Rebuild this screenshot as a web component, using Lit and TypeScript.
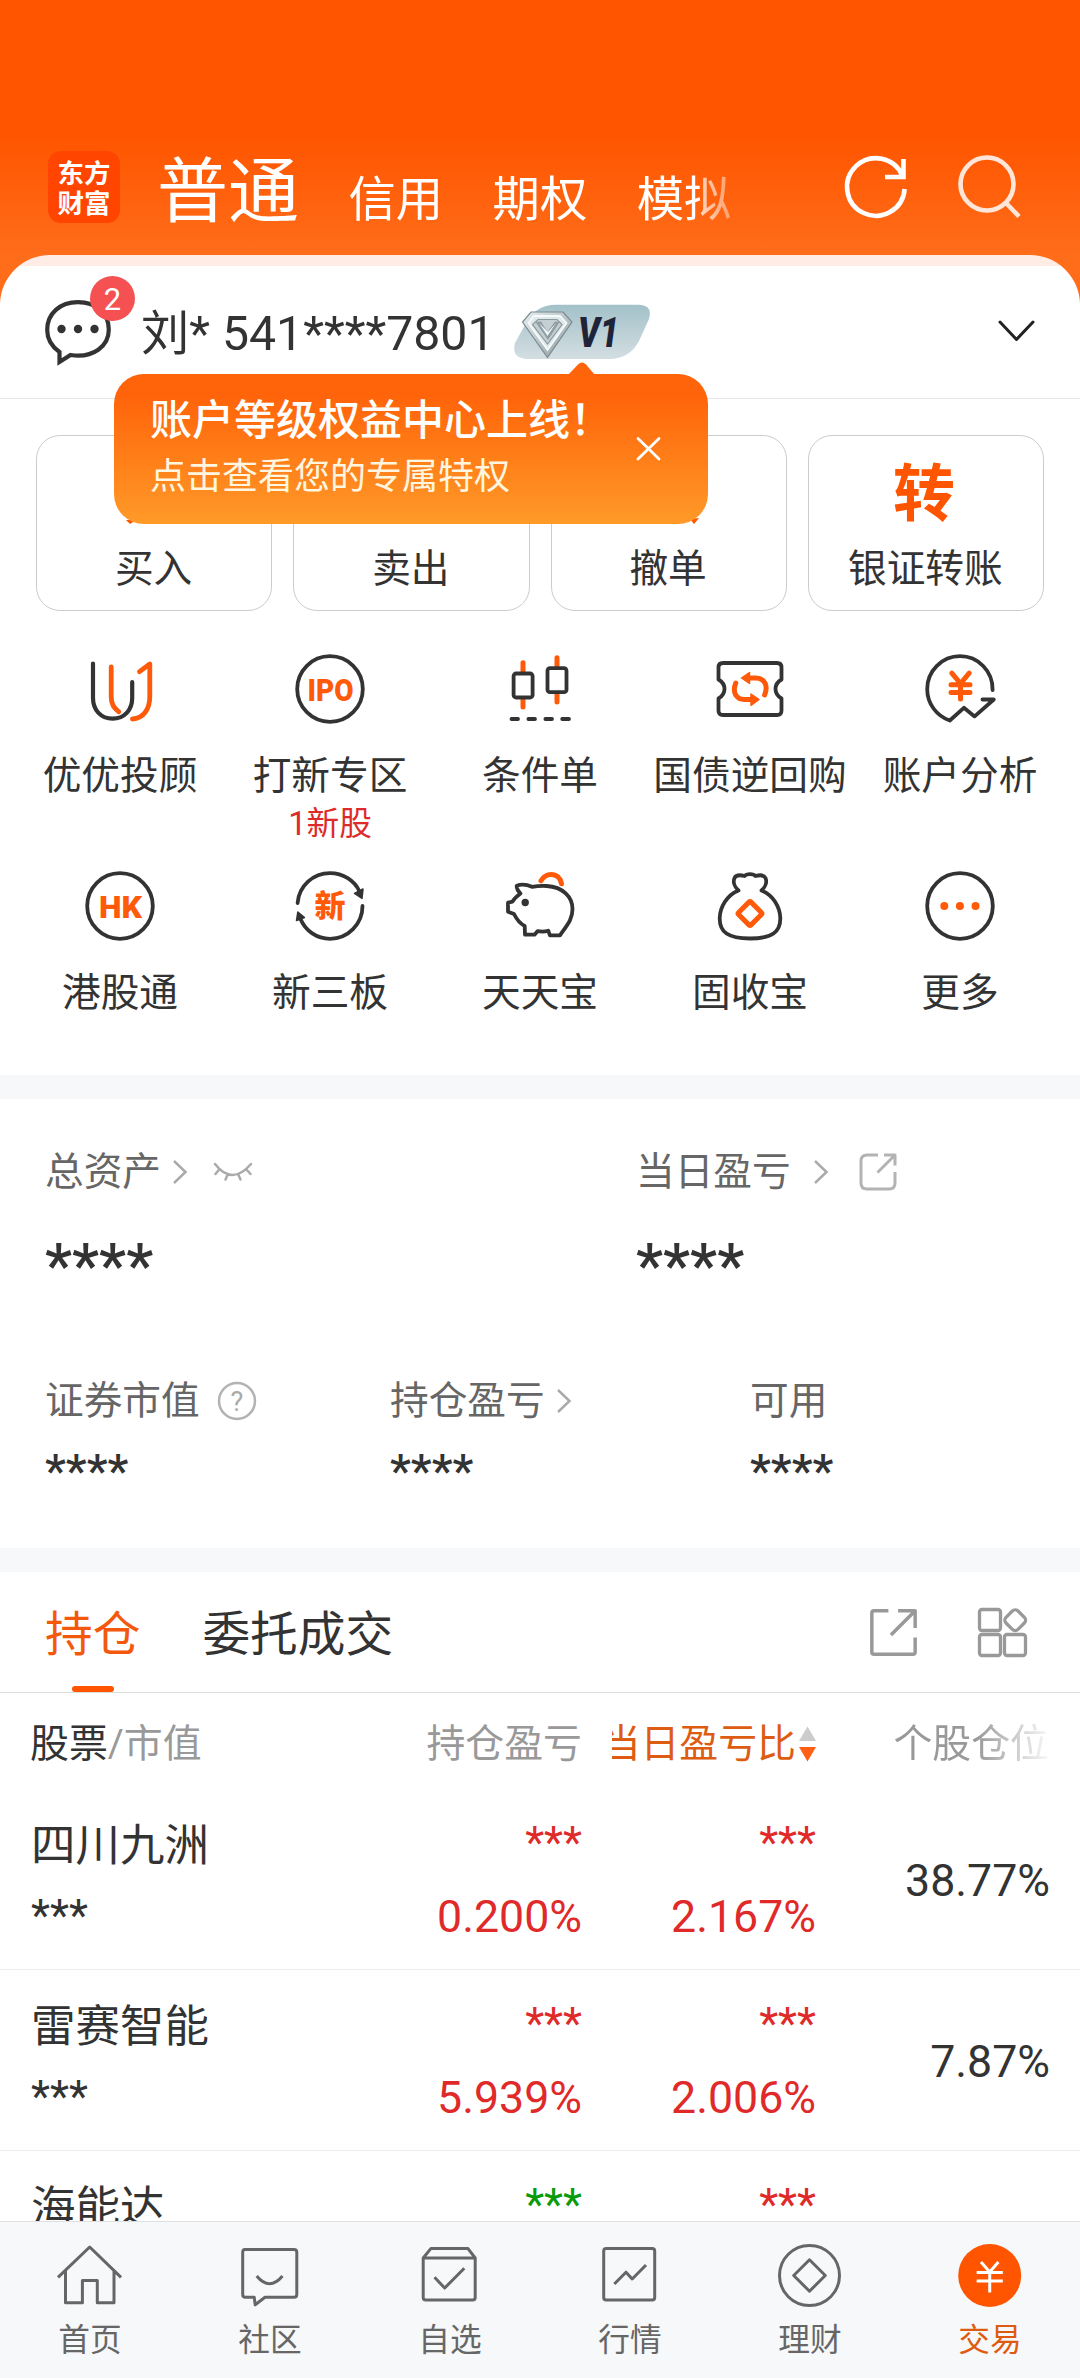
import { LitElement, html, svg, css, nothing, TemplateResult } from "lit";
import { customElement, property } from "lit/decorators.js";
import { classMap } from "lit/directives/class-map.js";

const INK = "#333333";
const ORANGE = "#ff5a0a";

/* Line icons, each drawn on an 80 x 80 board. */
const icons: Record<string, TemplateResult> = {
  advisor: svg`
    <g fill="none" stroke-width="4.2" stroke-linecap="round" stroke-linejoin="round">
      <path stroke="${INK}" d="M13 14.5V49C13 61 21 69.7 32.6 69.7S52.2 61 52.2 49V33"/>
      <path stroke="${ORANGE}" stroke-width="4.8" d="M31.2 18V48C31.2 54.5 34 59.5 38.8 62.7M59.5 22.7L69.8 15V47C69.8 61 63 69.5 52.4 70"/>
    </g>`,
  ipo: svg`
    <circle cx="40" cy="40" r="32.8" fill="none" stroke="${INK}" stroke-width="3.8"/>
    <text class="glyph" x="40.5" y="51.5" text-anchor="middle" font-size="32" textLength="46" lengthAdjust="spacingAndGlyphs">IPO</text>`,
  candles: svg`
    <g fill="none" stroke-linecap="round" stroke-linejoin="round">
      <path stroke="${ORANGE}" stroke-width="5" d="M23 13.8V24M23 50V58M57 8.8V19M57 44V53"/>
      <g stroke="${INK}" stroke-width="3.8">
        <rect x="13.6" y="24.5" width="19" height="24" rx="2.5" fill="#fff"/>
        <rect x="47.5" y="19.2" width="19" height="24" rx="2.5" fill="#fff"/>
        <path d="M11.5 70H18M28.4 70H35M45.4 70H52M62.2 70H69"/>
      </g>
    </g>`,
  ticket: svg`
    <path fill="none" stroke="${INK}" stroke-width="3.8" stroke-linejoin="round"
      d="M13 14H67Q71.5 14 71.5 18.5V30.5Q65.5 34 65.5 40T71.5 49.5V61.5Q71.5 66 67 66H13Q8.5 66 8.5 61.5V49.5Q14.5 46 14.5 40T8.5 30.5V18.5Q8.5 14 13 14Z"/>
    <path fill="none" stroke="${ORANGE}" stroke-width="5" stroke-linecap="round" d="M39 29H46C56 29.5 58 38 54.6 46M25.8 34C22 43 26 50.5 34.5 50.5H41"/>
    <path fill="${ORANGE}" stroke="${ORANGE}" stroke-width="1.5" stroke-linejoin="round" d="M31.5 29L39.5 23.5V34.5ZM49 50.5L41 45V56.3Z"/>`,
  analysis: svg`
    <g fill="none" stroke-linecap="round" stroke-linejoin="round">
      <path stroke="${INK}" stroke-width="3.8" d="M72.6 41C73 22 58 7.2 40 7.2S7.2 22 7.2 40C7.2 54.5 16.5 67 29.8 71.5L43.9 58.8L54.6 67.4L73.8 50.5H62.5"/>
      <path stroke="${ORANGE}" stroke-width="5" d="M31.8 24.2L40.5 34.5L49.2 24.2M31 35.7H50M31 43.5H50M40.5 35V50"/>
    </g>`,
  hk: svg`
    <circle cx="40" cy="40" r="32.8" fill="none" stroke="${INK}" stroke-width="3.8"/>
    <text class="glyph" x="40.5" y="51.5" text-anchor="middle" font-size="32" textLength="43" lengthAdjust="spacingAndGlyphs">HK</text>`,
  board: svg`
    <g fill="none" stroke="${INK}" stroke-width="3.8" stroke-linecap="round">
      <path d="M7.6 37C9 20 23 7.2 40 7.2C53 7.2 64.5 14.5 69.5 25.5"/>
      <path d="M72.5 40C72.5 58 58 72.8 40 72.8C27 72.8 15.5 65 10.5 53"/>
    </g>
    <path fill="${INK}" stroke="${INK}" stroke-width="1.5" stroke-linejoin="round" d="M64.5 27.5L73 23L72 32.5ZM7.8 46L6.5 54.5L14.5 51.5Z"/>
    <text class="glyph" x="40" y="51" text-anchor="middle" font-size="31">新</text>`,
  piggy: svg`
    <g fill="none" stroke-linecap="round" stroke-linejoin="round">
      <path stroke="${INK}" stroke-width="3.8" d="M20.5 27.5C18 25 16.5 22.5 16.7 19.7C22 17.7 28 19 32 20.8C37 20 42 19.8 46.7 20C63 21 72.5 31 72.5 43C72.5 53 68 58 60 69.3H50L48.3 64.8C45 65.8 41 65.8 37.5 65.2L34.5 68.7H25L24.7 60C19 57 16.5 53 14 48L8 45.7V36.7L12.5 35.7C14.5 32 17 30 20.5 27.5Z"/>
      <path stroke="${ORANGE}" stroke-width="5" d="M41 14.8C43.5 10.5 47 8.5 51 8.5C56.5 8.5 60.5 12 61.5 17.8"/>
    </g>
    <circle cx="25.2" cy="36.5" r="3.7" fill="${INK}"/>`,
  bag: svg`
    <path fill="none" stroke="${INK}" stroke-width="3.8" stroke-linejoin="round"
      d="M28.5 24.5C24 20.5 23 15.5 24.5 12C26 9 30 8.8 34.5 10C36.5 7.5 43.5 7.5 45.5 10C50 8.8 54 9 55.5 12C57 15.5 56 20.5 51.5 24.5C63 29 70 41 70.3 52C70.5 66 62 72.5 40 72.5S9.5 66 9.7 52C10 41 17 29 28.5 24.5Z"/>
    <rect x="31.2" y="38.7" width="17.6" height="17.6" rx="1.5" fill="none" stroke="${ORANGE}" stroke-width="5" stroke-linejoin="round" transform="rotate(45 40 47.5)"/>`,
  more: svg`
    <circle cx="40" cy="40" r="32.8" fill="none" stroke="${INK}" stroke-width="3.8"/>
    <g fill="${ORANGE}"><circle cx="24.3" cy="40" r="4"/><circle cx="39.9" cy="40" r="4"/><circle cx="55.5" cy="40" r="4"/></g>`,
  home: svg`<path class="line" d="M8 42.3L39.7 12L71 42.3M15.5 35.5V67.8H32.4V45.4H47.3V67.8H64V35.5"/>`,
  community: svg`<path class="line" d="M15 14.4H64Q66.8 14.4 66.8 17.2V59.5Q66.8 62.3 64 62.3H35L25.2 69.8L24.2 62.3H15.5Q12.7 62.3 12.7 59.5V17.2Q12.7 14.4 15 14.4ZM26.7 41Q39.5 56.5 52.5 41"/>`,
  watch: svg`<path class="line" d="M13.2 23L20.8 13.6H58L65.2 23V62.5Q65.2 65 62.7 65H15.7Q13.2 65 13.2 62.5ZM13.2 23H65.2M24.5 42.3L34.7 53L54.3 33.3"/>`,
  market: svg`<rect class="line" x="13.7" y="13.6" width="51" height="51.5" rx="2.5"/><path class="line" d="M24.3 49L36 37.2L42.2 44L56 30"/>`,
  wealth: svg`<circle class="line" cx="39.5" cy="40.5" r="30"/><path class="line" d="M39.5 24.8L55.3 40.5L39.5 56.2L23.7 40.5Z"/>`,
  trade: svg`<circle cx="39.7" cy="40.5" r="31.5" fill="#ff5500"/>
    <path fill="none" stroke="#fff" stroke-width="3" d="M31 27L39.7 37L48.4 27M26.6 37.5H52.8M26.6 46H52.8M39.7 37V57.5"/>`,
};

const board = (name: string) => html`<svg class="icon" viewBox="0 0 80 80">${icons[name]}</svg>`;

const shareSquare = html`
  <svg width="47" height="47" viewBox="0 0 46 46">
    <path fill="none" stroke="#999999" stroke-width="3.4" stroke-linejoin="round"
      d="M18 1.8H4Q1.8 1.8 1.8 4V42Q1.8 44.2 4 44.2H42Q44.2 44.2 44.2 42V28M27.5 1.8H44.2V18.5M43.5 2.5L20.5 25.5"/>
  </svg>`;

const shareRound = html`
  <svg width="38" height="38" viewBox="0 0 38 38">
    <path fill="none" stroke="#b3b3b3" stroke-width="3" stroke-linejoin="round"
      d="M19 2H8Q2 2 2 8V30Q2 36 8 36H30Q36 36 36 30V19M25 2H36V12.5M35 3L18.5 19.5"/>
  </svg>`;

const arrow = html`
  <svg class="arrow" width="16" height="26" viewBox="0 0 16 26">
    <path fill="none" stroke="#aaaaaa" stroke-width="2.5" d="M2 2L13.5 13L2 24"/>
  </svg>`;

const base = css`
  :host, * { box-sizing: border-box; }
  svg { display: block; flex: none; }
  .icon { width: 80px; height: 80px; }
  .glyph { fill: #ff5a0a; font-family: Roboto, "Noto Sans CJK SC", sans-serif; font-weight: 900; }
`;

@customElement("app-header")
class AppHeader extends LitElement {
  static styles = [base, css`
    :host { display: block; height: 303px; padding: 141px 48px 0; color: #fff;
      background: linear-gradient(#ff5500 0, #ff5500 135px, #ff6d1a 255px, #ff6d1a 303px); }
    .bar { display: flex; align-items: center; height: 92px; }
    .logo { width: 72px; height: 72px; border-radius: 13px; background: #ff4500; display: grid;
      align-content: center; justify-content: center; font: 700 26.5px/30px "Noto Sans CJK SC", sans-serif; }
    .tabs { display: flex; align-items: baseline; width: 575px; margin-left: 38px; padding-top: 17px; overflow: hidden; white-space: nowrap;
      -webkit-mask-image: linear-gradient(90deg, #000 543px, rgba(0,0,0,.7) 545px, rgba(0,0,0,.35) 575px);
      mask-image: linear-gradient(90deg, #000 543px, rgba(0,0,0,.7) 545px, rgba(0,0,0,.35) 575px); }
    .tab { font-size: 47.3px; line-height: 94px; margin-left: 49.5px; }
    .tab.on { font-size: 71px; margin-left: -1px; }
    .reload { margin-left: 107px; margin-top: 2px; }
    .search { margin-left: 42px; }
  `];
  render() {
    return html`
      <div class="bar">
        <div class="logo"><span>东方</span><span>财富</span></div>
        <nav class="tabs">
          <span class="tab on">普通</span><span class="tab">信用</span><span class="tab">期权</span><span class="tab">模拟</span>
        </nav>
        <svg class="reload" width="72" height="72" viewBox="840 152 72 72">
          <path fill="none" stroke="#fff" stroke-width="4.6" d="M902.5 176A28.8 28.8 0 1 0 904.6 189M885 177H903.5V159"/>
        </svg>
        <svg class="search" width="72" height="72" viewBox="954 151 72 72">
          <path fill="none" stroke="#ffe6d8" stroke-width="4.6" d="M1006 203L1019 216.5"/>
          <circle cx="987" cy="184" r="26.5" fill="none" stroke="#ffe6d8" stroke-width="4.6"/>
        </svg>
      </div>`;
  }
}

@customElement("account-bar")
class AccountBar extends LitElement {
  static styles = [base, css`
    :host { display: block; position: relative; z-index: 2; }
    .row { display: flex; align-items: center; height: 144px; padding: 15px 44px 0 43px;
      border-bottom: 1px solid #e6e6e6; border-radius: 50px 50px 0 0;
      background: linear-gradient(#ffece4 11px, #ffffff 11px); }
    .chat { position: relative; width: 72px; height: 72px; margin-top: -2px; }
    .count { position: absolute; left: 47px; top: -21px; width: 45px; height: 45px; border-radius: 50%;
      background: #f55052; color: #fff; font-size: 31px; line-height: 47px; text-align: center; }
    .id { margin-left: 26px; width: 370px; font-size: 48.2px; line-height: 60px; white-space: nowrap; color: #333; }
    .level { margin-top: -4px; }
    .level text { font: italic 900 42px Roboto, sans-serif; fill: #1f2338; }
    .open { margin-left: auto; margin-top: -6px; }
    .tip { position: absolute; left: 114px; top: 119px; width: 593.5px; height: 150px; border-radius: 30px;
      display: flex; justify-content: space-between; padding: 17px 45px 0 36px; color: #fff;
      background: linear-gradient(#ff640a 15%, #ff9a28); }
    .peak { position: absolute; left: 453px; top: -12px; }
    .title { font-size: 42px; line-height: 60px; font-weight: 500; white-space: nowrap; }
    .sub { font-size: 36px; line-height: 52px; color: #fff6e0; white-space: nowrap; }
    .close { margin-top: 42px; }
  `];
  render() {
    return html`
      <div class="row">
        <div class="chat">
          <svg width="72" height="72" viewBox="43 296 72 72">
            <path fill="none" stroke="#333" stroke-width="4.2" stroke-linejoin="miter"
              d="M59.5 351C51 345 47.2 337.5 47.2 329C47.2 312.5 60 301.2 78 301.2S108.8 312.5 108.8 328.5C108.8 345 93.5 357.5 70.5 354L59.5 361Z"/>
            <g fill="#333"><circle cx="61.5" cy="328" r="4.2"/><circle cx="78" cy="328" r="4.2"/><circle cx="94.5" cy="328" r="4.2"/></g>
          </svg>
          <span class="count">2</span>
        </div>
        <span class="id">刘* 541****7801</span>
        <svg class="level" width="140" height="60" viewBox="511 302 140 60">
          <defs>
            <linearGradient id="plate" x1="0" y1="0" x2="0" y2="1"><stop offset="0" stop-color="#a3c1c9"/><stop offset="1" stop-color="#d3dee2"/></linearGradient>
            <linearGradient id="gem" x1="0" y1="0" x2="1" y2="1"><stop offset="0" stop-color="#e6eef0"/><stop offset=".5" stop-color="#b9c6ca"/><stop offset="1" stop-color="#89979c"/></linearGradient>
          </defs>
          <path fill="url(#plate)" d="M556 304.7H639Q653 305 649 319L639 341Q630 358 611 359H527Q511 358 515 343L526 323Q535 305 556 304.7Z"/>
          <path fill="url(#gem)" stroke="#7c898e" stroke-width="1.2" d="M531 312H563L572 322L547.5 357.5L522.5 322Z"/>
          <path fill="#dfe8ea" stroke="#f6fafa" stroke-width="1.8" d="M534 316H560L566.5 323L547.5 350L528.5 323Z"/>
          <path fill="#c3cfd3" stroke="#8b999e" stroke-width="1.2" d="M538 319.5H557L562 324.5L547.5 344L532.5 324.5Z"/>
          <path fill="#8f9da2" d="M535.5 322L541 321.5L547.5 332L555 321.5L559.5 322L548 340Z"/>
          <path fill="#eef4f5" d="M539 323L547.5 336L556 323L548 332Z"/>
          <text x="578" y="347" textLength="41" lengthAdjust="spacingAndGlyphs">V1</text>
        </svg>
        <svg class="open" width="40" height="26" viewBox="0 0 40 26">
          <path fill="none" stroke="#222" stroke-width="3" stroke-linecap="round" stroke-linejoin="round" d="M4 4L20.5 21.5L37 4"/>
        </svg>
      </div>
      <div class="tip">
        <svg class="peak" width="30" height="13" viewBox="0 0 30 13"><path fill="#ff640a" d="M1 13L11 2.5Q15 -1.5 19 2.5L28 13Z"/></svg>
        <div>
          <div class="title">账户等级权益中心上线！</div>
          <div class="sub">点击查看您的专属特权</div>
        </div>
        <svg class="close" width="30" height="30" viewBox="0 0 30 30"><path fill="none" stroke="#fff" stroke-width="2.8" stroke-linecap="round" d="M5 5.5L26 26M26 5.5L5 26"/></svg>
      </div>`;
  }
}

@customElement("quick-actions")
class QuickActions extends LitElement {
  static styles = [base, css`
    :host { display: block; height: 676px; padding: 36px 36px 0; background: #fff; color: #333; }
    .cards { display: grid; grid-template-columns: repeat(4, 1fr); gap: 21px; }
    .card { height: 176px; border: 1.5px solid #ccc; border-radius: 24px; display: flex; flex-direction: column;
      align-items: center; padding: 18px 1px 0 0; font-size: 38.7px; line-height: 50px; }
    .mark { width: 80px; height: 80px; margin-bottom: 10px; }
    .mark text { font: 700 62px "Noto Sans CJK SC", sans-serif; fill: #ff5500; }
    .grid { display: grid; grid-template-columns: repeat(5, 210px); grid-auto-rows: 217px; margin: 38px -21px 0; }
    .cell { display: flex; flex-direction: column; align-items: center; font-size: 38.7px; line-height: 50px; white-space: nowrap; }
    .label { margin-top: 22px; }
    .note { font-size: 32.7px; line-height: 46px; color: #dd2a2a; }
  `];
  private cards = [
    { label: "买入", mark: svg`<path fill="#ff5500" d="M12 66L22 66L16 70Z"/>` },
    { label: "卖出", mark: svg`` },
    { label: "撤单", mark: svg`<path fill="#ff5500" d="M62 65L71 64L66 70Z"/>` },
    { label: "银证转账", mark: svg`<text x="39" y="62" text-anchor="middle">转</text>` },
  ];
  private tools = [
    ["advisor", "优优投顾"], ["ipo", "打新专区", "1新股"], ["candles", "条件单"], ["ticket", "国债逆回购"], ["analysis", "账户分析"],
    ["hk", "港股通"], ["board", "新三板"], ["piggy", "天天宝"], ["bag", "固收宝"], ["more", "更多"],
  ];
  render() {
    return html`
      <div class="cards">
        ${this.cards.map((c) => html`<div class="card"><svg class="mark" viewBox="0 0 80 80">${c.mark}</svg><span>${c.label}</span></div>`)}
      </div>
      <div class="grid">
        ${this.tools.map(([icon, label, note]) => html`
          <div class="cell">${board(icon)}<span class="label">${label}</span>${note ? html`<span class="note">${note}</span>` : nothing}</div>`)}
      </div>`;
  }
}

@customElement("asset-panel")
class AssetPanel extends LitElement {
  static styles = [base, css`
    :host { display: block; height: 449px; padding: 43px 45px 0; color: #333; background: #fff; }
    .line { display: grid; }
    .main { grid-template-columns: 591px 1fr; height: 229px; }
    .minor { grid-template-columns: 345px 360px 1fr; }
    .label { display: flex; align-items: center; font-size: 38.7px; line-height: 62px; height: 60px; color: #666; white-space: nowrap; }
    .arrow { margin-left: 11px; }
    .eye { margin-left: 24px; }
    .gap .arrow { margin-left: 22px; }
    .share { margin-left: 30px; }
    .help { margin-left: 17px; }
    .help text { font: 27px Roboto, sans-serif; fill: #aaa; }
    .stars { font-size: 61px; line-height: 80px; font-weight: 500; margin-top: 24px; }
    .minor .stars { font-size: 47px; line-height: 60px; margin-top: 10px; }
  `];
  render() {
    return html`
      <div class="line main">
        <div>
          <div class="label">总资产${arrow}
            <svg class="eye" width="42" height="24" viewBox="0 0 42 24">
              <path fill="none" stroke="#aaa" stroke-width="2.5" stroke-linecap="round" d="M3 4Q20 26 39 4M7.5 9L3.5 14M16 14L13.5 19.5M26 14L28.5 19.5M34 9L38.5 14"/>
            </svg>
          </div>
          <div class="stars">****</div>
        </div>
        <div>
          <div class="label gap">当日盈亏${arrow}<span class="share">${shareRound}</span></div>
          <div class="stars">****</div>
        </div>
      </div>
      <div class="line minor">
        <div>
          <div class="label">证券市值<svg class="help" width="40" height="40" viewBox="0 0 40 40">
            <circle cx="20" cy="20" r="18" fill="none" stroke="#b3b3b3" stroke-width="2.5"/><text x="20" y="29.5" text-anchor="middle">?</text></svg></div>
          <div class="stars">****</div>
        </div>
        <div><div class="label">持仓盈亏${arrow}</div><div class="stars">****</div></div>
        <div><div class="label">可用</div><div class="stars">****</div></div>
      </div>`;
  }
}

interface Holding { name: string; totalDown?: boolean; total?: string; day?: string; share?: string; }

@customElement("holding-row")
class HoldingRow extends LitElement {
  @property({ attribute: false }) item!: Holding;
  static styles = [base, css`
    :host { display: grid; grid-template-columns: 348px 234px 234px 234px; height: 181px; padding: 25px 30px 0 0;
      border-bottom: 1.5px solid #ececec; font-size: 44.7px; line-height: 60px; color: #333; }
    .name { padding-left: 31px; }
    .title { padding-top: 2px; height: 60px; font-size: 44.5px; }
    .mask { font-size: 44px; line-height: 58px; height: 60px; }
    .value { margin-top: 13px; }
    .num { text-align: right; color: #e02a2a; }
    .down { color: #0a9b0a; }
    .pct { text-align: right; padding-top: 37px; }
  `];
  render() {
    const h = this.item;
    return html`
      <div class="name"><div class="title">${h.name}</div>${h.total ? html`<div class="mask value">***</div>` : nothing}</div>
      <div class="num"><div class=${classMap({ mask: true, down: !!h.totalDown })}>***</div>${h.total ? html`<div class="value">${h.total}</div>` : nothing}</div>
      <div class="num"><div class="mask">***</div>${h.day ? html`<div class="value">${h.day}</div>` : nothing}</div>
      ${h.share ? html`<div class="pct">${h.share}</div>` : nothing}`;
  }
}

@customElement("holdings-panel")
class HoldingsPanel extends LitElement {
  static styles = [base, css`
    :host { display: block; background: #fff; color: #333; }
    .tabs { display: flex; align-items: center; height: 121px; padding: 0 52px 0 45px; border-bottom: 1.5px solid #ddd; font-size: 47.7px; }
    .tab { position: relative; height: 120px; line-height: 126px; margin-right: 62px; }
    .tab.on { color: #f2590d; }
    .tab.on::after { content: ""; position: absolute; left: 27px; bottom: 0; width: 42px; height: 6px; border-radius: 3px; background: #ff5500; }
    .share { margin-left: auto; margin-right: 60px; }
    .head { display: grid; grid-template-columns: 348px 234px 234px 234px; height: 96px; padding-right: 30px;
      font-size: 38.9px; line-height: 101px; color: #999; white-space: nowrap; }
    .first { padding-left: 30px; }
    .first b { color: #333; font-weight: 400; }
    .col { text-align: right; }
    .sorted { display: flex; justify-content: flex-end; align-items: center; margin-left: 30px; overflow: hidden; color: #dd5c12; }
    .sorter { margin-left: 3px; }
    .fade { padding-right: 1px; -webkit-mask-image: linear-gradient(90deg, #000 160px, rgba(0,0,0,.05) 234px);
      mask-image: linear-gradient(90deg, #000 160px, rgba(0,0,0,.05) 234px); }
  `];
  private items: Holding[] = [
    { name: "四川九洲", total: "0.200%", day: "2.167%", share: "38.77%" },
    { name: "雷赛智能", total: "5.939%", day: "2.006%", share: "7.87%" },
    { name: "海能达", totalDown: true },
  ];
  render() {
    return html`
      <div class="tabs">
        <span class="tab on">持仓</span><span class="tab">委托成交</span>
        <span class="share">${shareSquare}</span>
        <svg width="51" height="51" viewBox="0 0 51 51">
          <g fill="none" stroke="#999" stroke-width="3.3">
            <rect x="2.5" y="2.5" width="21" height="21" rx="2.5"/><rect x="2.5" y="27.5" width="21" height="21" rx="2.5"/>
            <rect x="27.5" y="27.5" width="21" height="21" rx="2.5"/>
            <rect x="29.7" y="4.7" width="17" height="17" rx="4" transform="rotate(45 38.2 13.2)"/>
          </g>
        </svg>
      </div>
      <div class="head">
        <div class="first"><b>股票</b>/市值</div>
        <div class="col">持仓盈亏</div>
        <div class="sorted">当日盈亏比<svg class="sorter" width="17" height="36" viewBox="0 0 17 36">
          <path fill="#ccc" d="M8.5 0.5L17 15H0Z"/><path fill="#ff5f14" d="M8.5 35.5L17 21H0Z"/></svg></div>
        <div class="col fade">个股仓位</div>
      </div>
      ${this.items.map((i) => html`<holding-row .item=${i}></holding-row>`)}`;
  }
}

@customElement("bottom-nav")
class BottomNav extends LitElement {
  static styles = [base, css`
    :host { display: grid; grid-template-columns: repeat(6, 1fr); flex: none; height: 157px; padding-top: 13px;
      background: #f7f8fa; border-top: 1.5px solid #dfe0e2; color: #666; }
    .item { display: flex; flex-direction: column; align-items: center; font-size: 31.7px; line-height: 44px; }
    .item span { margin-top: 4px; }
    .on { color: #dd5c12; }
    .line { fill: none; stroke: #666; stroke-width: 3; stroke-linejoin: round; }
  `];
  private items = [["home", "首页"], ["community", "社区"], ["watch", "自选"], ["market", "行情"], ["wealth", "理财"], ["trade", "交易"]];
  render() {
    return this.items.map(([icon, label]) => html`
      <div class=${classMap({ item: true, on: icon === "trade" })}>${board(icon)}<span>${label}</span></div>`);
  }
}

@customElement("app-root")
class AppRoot extends LitElement {
  static styles = css`
    :host { display: flex; flex-direction: column; width: 1080px; height: 2378px; overflow: hidden; background: #fff;
      font-family: Roboto, "Noto Sans CJK SC", sans-serif; }
    .body { flex: 1; min-height: 0; overflow: hidden; }
    .sheet { margin-top: -48px; }
    .band { height: 24px; background: #f7f8fa; }
  `;
  render() {
    return html`
      <div class="body">
        <app-header></app-header>
        <div class="sheet">
          <account-bar></account-bar>
          <quick-actions></quick-actions>
          <div class="band"></div>
          <asset-panel></asset-panel>
          <div class="band"></div>
          <holdings-panel></holdings-panel>
        </div>
      </div>
      <bottom-nav></bottom-nav>`;
  }
}
